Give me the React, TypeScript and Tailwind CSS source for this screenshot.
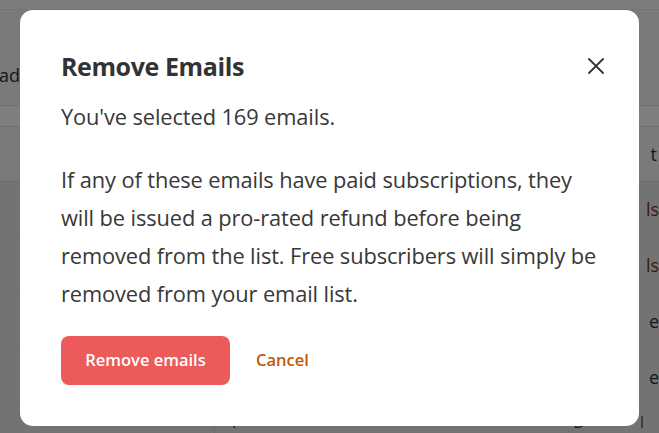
const rows = [
  { right: "ls", tone: "text-[#7a3a10]" },
  { right: "ls", tone: "text-[#7a3a10]" },
  { right: "e", tone: "text-[#333]" },
  { right: "e", tone: "text-[#333]" },
];

function Page() {
  return (
    <div className="h-[433px] w-[659px] overflow-hidden bg-[#f4f4f4] font-['Open_Sans',sans-serif] text-[#333]">
      <div className="h-[10px] border-b border-[#e6e6e6] bg-[#fafafa]" />
      <div className="flex h-[96px] items-center border-b border-[#e0e0e0] text-[18px]">
        <span className="-ml-[1px] pt-[36px]">ade</span>
      </div>
      <div className="h-[21px] border-b border-[#dcdcdc] bg-[#fcfcfc]" />
      <div className="flex h-[55px] items-center justify-end border-b border-[#dcdcdc] bg-[#f4f4f4] text-[18px]">
        <span className="pr-[2px]">t</span>
      </div>
      {rows.map((row, i) => (
        <div
          key={i}
          className="flex h-[56px] items-center justify-end border-b border-[#dcdcdc] bg-[#e6e6e6] text-[18px]"
        >
          <span className={row.tone}>{row.right}</span>
        </div>
      ))}
      <div className="flex h-[30px] bg-[#e6e6e6] text-[16px]">
        <div className="w-[215px] border-r border-[#cfcfcf]" />
        <span className="ml-[17px] pt-[4px]">F</span>
        <span className="ml-auto mr-[55px] pt-[4px]">D</span>
        <span className="mr-[15px] pt-[4px] text-[#7a3a10]">l</span>
      </div>
    </div>
  );
}

export default function App() {
  return (
    <div className="relative h-[433px] w-[659px] overflow-hidden">
      <Page />
      <div className="absolute inset-0 bg-black/50" />
      <div className="absolute left-[20px] top-[10px] w-[619px] rounded-[13px] bg-white px-[41px] pb-[41px] pt-[40px] font-['Open_Sans',sans-serif] text-[#383838]">
        <div className="flex items-center justify-between">
          <h2 className="text-[25px] font-bold leading-[32px] tracking-[-0.4px] text-[#333]">
            Remove Emails
          </h2>
          <button type="button" aria-label="Close" className="-mr-[6px] text-[#333]">
            <svg width="16" height="16" viewBox="0 0 16 16" fill="none" stroke="currentColor" strokeWidth="1.8" strokeLinecap="round">
              <path d="M1 1l14 14M15 1L1 15" />
            </svg>
          </button>
        </div>
        <p className="mt-[16px] text-[21.8px] leading-[38px] tracking-[-0.1px]">
          You've selected 169 emails.
        </p>
        <p className="mt-[25px] whitespace-nowrap text-[21.8px] leading-[38px] tracking-[-0.1px]">
          If any of these emails have paid subscriptions, they
          <br />
          will be issued a pro-rated refund before being
          <br />
          removed from the list. Free subscribers will simply be
          <br />
          removed from your email list.
        </p>
        <div className="mt-[23px] flex items-center gap-[26px]">
          <button
            type="button"
            className="h-[49px] w-[169px] rounded-[8px] bg-[#ec5a5a] text-[16.5px] font-semibold text-white"
          >
            Remove emails
          </button>
          <button type="button" className="text-[16.5px] font-semibold text-[#c2570c]">
            Cancel
          </button>
        </div>
      </div>
    </div>
  );
}
